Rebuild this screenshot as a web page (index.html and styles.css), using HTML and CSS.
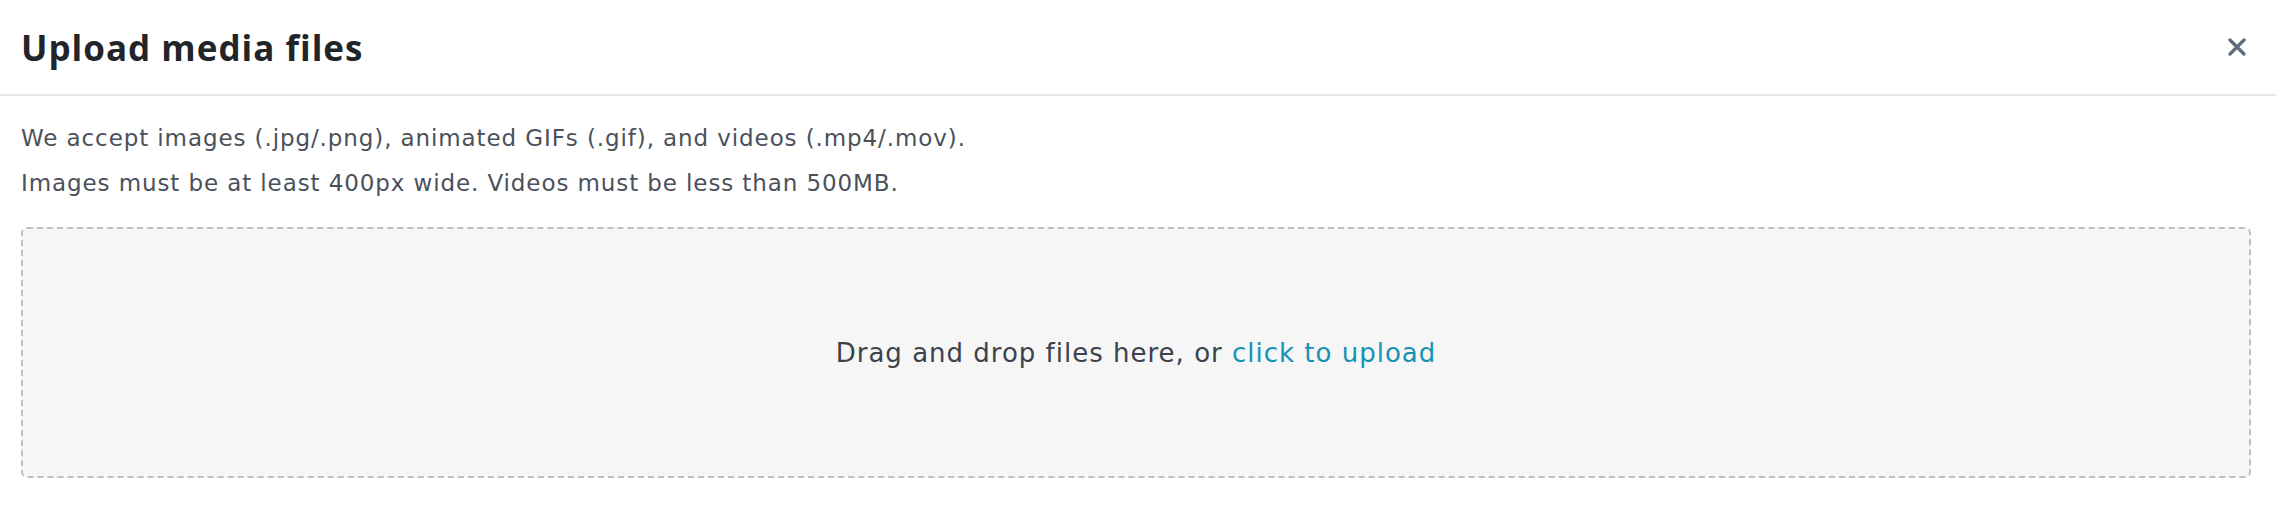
FILE: index.html
```html
<!DOCTYPE html>
<html lang="en">
<head>
    <meta charset="UTF-8">
    <meta name="viewport" content="width=device-width, initial-scale=1.0">
    <title>Upload media files</title>
    <link rel="stylesheet" href="styles.css">
</head>
<body>
    <div class="modal">
        <div class="modal_header">
            <h2 class="modal_title">Upload media files</h2>
            <button class="close_button" type="button" aria-label="Close">
                <svg width="18" height="18" viewBox="0 0 18 18">
                    <path d="M2 2 L16 16 M16 2 L2 16" stroke="currentColor" stroke-width="3.2" stroke-linecap="round" fill="none"/>
                </svg>
            </button>
        </div>
        <div class="modal_body">
            <p class="hint">We accept images (.jpg/.png), animated GIFs (.gif), and videos (.mp4/.mov).</p>
            <p class="hint">Images must be at least 400px wide. Videos must be less than 500MB.</p>
            <label for="file_input" class="dropzone">
                <span class="dropzone_text">Drag and drop files here, or <span class="dropzone_link">click to upload</span></span>
            </label>
            <input type="file" id="file_input" multiple>
        </div>
    </div>
</body>
</html>
```

FILE: styles.css
```css
body
{
    margin: 0;
    background-color: #fff;
    font-family: "DejaVu Sans", "Open Sans", sans-serif;
}
input
{
    display: none;
}
.modal_header
{
    display: flex;
    align-items: center;
    justify-content: space-between;
    height: 94px;
    padding: 0 30px 0 21px;
    border-bottom: 2px solid #e6e7ea;
}
.modal_title
{
    margin: 0;
    font-family: "Open Sans", sans-serif;
    font-size: 35px;
    font-weight: 700;
    letter-spacing: 1px;
    color: #212529;
}
.close_button
{
    display: flex;
    padding: 0;
    border: none;
    background: none;
    color: #5e6b7a;
    cursor: pointer;
}
.modal_body
{
    padding: 20px 25px 0 21px;
}
.hint
{
    margin: 0;
    font-size: 23px;
    line-height: 45px;
    letter-spacing: 0.9px;
    color: #4a515b;
}
.dropzone
{
    display: flex;
    align-items: center;
    justify-content: center;
    box-sizing: border-box;
    height: 251px;
    margin-top: 21px;
    border: 2px dashed #bcc0c7;
    border-radius: 6px;
    background-color: #f6f6f6;
    cursor: pointer;
}
.dropzone_text
{
    font-size: 26px;
    letter-spacing: 1px;
    color: #3b424c;
}
.dropzone_link
{
    color: #1592b6;
}
```
